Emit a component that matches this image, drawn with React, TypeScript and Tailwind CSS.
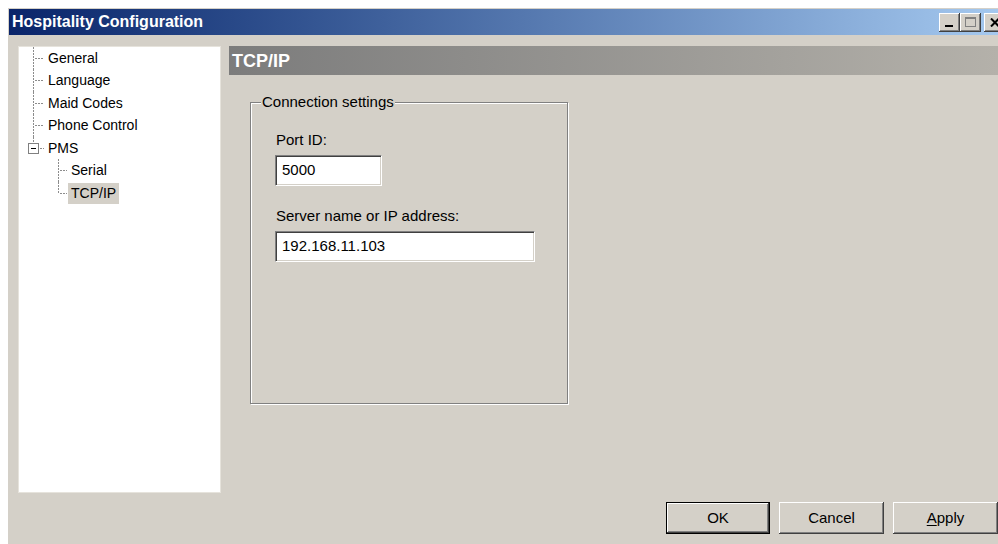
import type { ReactNode } from "react";

const FONT = { fontFamily: '"Liberation Sans", Arial, sans-serif' };

// classic 3D bevels
const RAISED =
  "shadow-[inset_-1px_-1px_0_#404040,inset_1px_1px_0_#ffffff,inset_-2px_-2px_0_#808080,inset_2px_2px_0_#d4d0c8]";
const SUNKEN =
  "border border-t-[#808080] border-l-[#808080] border-b-white border-r-white shadow-[inset_1px_1px_0_#404040,inset_-1px_-1px_0_#d4d0c8]";

function CaptionButton({ children, className = "" }: { children: ReactNode; className?: string }) {
  return (
    <div className={`w-[21px] h-[19px] bg-[#d4d0c8] flex items-center justify-center ${RAISED} ${className}`}>
      {children}
    </div>
  );
}

function TitleBar() {
  return (
    <div className="h-[26px] ml-[1px] pl-[3px] pr-[2px] flex items-center bg-gradient-to-r from-[#0a246a] to-[#a6caf0]">
      <span className="text-white font-bold text-[16px] leading-none">Hospitality Configuration</span>
      <div className="ml-auto flex items-center">
        <CaptionButton>
          <div className="w-[8px] h-[2px] bg-black mt-[8px] mr-[2px]" />
        </CaptionButton>
        <CaptionButton>
          <div className="w-[11px] h-[10px] border border-[#808080] border-t-2" />
        </CaptionButton>
        <CaptionButton className="ml-[3px]">
          <svg width="10" height="9" viewBox="0 0 10 9">
            <path d="M1 0.5 L9 8.5 M9 0.5 L1 8.5" stroke="#000" strokeWidth="2" />
          </svg>
        </CaptionButton>
      </div>
    </div>
  );
}

type Node = { label: string; level: 0 | 1; last?: boolean; expander?: boolean; selected?: boolean };

const TREE: Node[] = [
  { label: "General", level: 0 },
  { label: "Language", level: 0 },
  { label: "Maid Codes", level: 0 },
  { label: "Phone Control", level: 0 },
  { label: "PMS", level: 0, last: true, expander: true },
  { label: "Serial", level: 1 },
  { label: "TCP/IP", level: 1, last: true, selected: true },
];

const GUIDE = "#8c8c8c";

// tree guide lines for one row: vertical guide at `x`, stub out to the label
function Guide({ width, x, last, expander }: { width: number; x: number; last?: boolean; expander?: boolean }) {
  const mid = 11.5;
  const dots = { stroke: GUIDE, strokeWidth: 1, strokeDasharray: "2 1" };
  return (
    <svg width={width} height={23} className="shrink-0 block">
      {expander ? (
        <>
          <line x1={x + 0.5} y1={0} x2={x + 0.5} y2={6} {...dots} />
          <rect x={x - 4.5} y={6.5} width={10} height={10} fill="#fff" stroke="#808080" />
          <line x1={x - 2} y1={mid} x2={x + 3} y2={mid} stroke="#000" />
          <line x1={x + 7} y1={mid} x2={width - 1} y2={mid} {...dots} />
        </>
      ) : (
        <>
          <line x1={x + 0.5} y1={0} x2={x + 0.5} y2={last ? mid : 23} {...dots} />
          <line x1={x + 2} y1={mid} x2={width - 1} y2={mid} {...dots} />
        </>
      )}
    </svg>
  );
}

function TreeRow({ node }: { node: Node }) {
  return (
    <div className="h-[22.5px] flex items-center">
      {node.level === 1 && <div className="w-[26px] shrink-0" />}
      {node.level === 0 ? (
        <Guide width={26} x={14} last={node.last} expander={node.expander} />
      ) : (
        <Guide width={23} x={13} last={node.last} />
      )}
      <span
        className={`px-[3px] h-[21px] flex items-center text-[14px] text-black ${
          node.selected ? "bg-[#d4d0c8]" : ""
        }`}
      >
        {node.label}
      </span>
    </div>
  );
}

function Field({ label, value, width }: { label: string; value: string; width: number }) {
  return (
    <div className="flex flex-col">
      <span className="text-[15px] leading-[17px] pl-[1px]">{label}</span>
      <div
        className={`mt-[7px] h-[31px] bg-white flex items-center pl-[6px] text-[15px] ${SUNKEN}`}
        style={{ width }}
      >
        {value}
      </div>
    </div>
  );
}

function DialogButton({ children, isDefault }: { children: ReactNode; isDefault?: boolean }) {
  return (
    <button
      type="button"
      className={`h-[32px] bg-[#d4d0c8] text-[15px] text-black flex items-center justify-center ${
        isDefault ? "w-[104px] border border-black" : "w-[105px]"
      } ${RAISED}`}
    >
      {children}
    </button>
  );
}

export default function App() {
  return (
    <div className="w-[998px] h-[544px] overflow-hidden bg-white pt-2 pl-2" style={FONT}>
      <div className="w-[999px] h-[540px] bg-[#d4d0c8] pt-[1px] flex flex-col">
        <TitleBar />

        <div className="pt-[11px] pl-[10px] pr-[9px] flex flex-col">
          <div className="flex gap-[8px]">
            <div className="w-[203px] h-[447px] bg-white border border-[#e6e3dc] shrink-0">
              {TREE.map((n) => (
                <TreeRow key={n.label} node={n} />
              ))}
            </div>

            <div className="flex-1 flex flex-col">
              <div className="h-[29px] flex items-center pl-[3px] bg-gradient-to-r from-[#7c7c7c] to-[#b4b1aa]">
                <span className="text-white font-bold text-[18px] leading-none">TCP/IP</span>
              </div>

              <div className="mt-[27px] ml-[21px] relative w-[318px] h-[302px] border border-[#808080] shadow-[inset_1px_1px_0_#ffffff,1px_1px_0_#ffffff]">
                <span className="absolute -top-[10px] left-[10px] px-[1px] bg-[#d4d0c8] text-[15px] leading-[17px]">
                  Connection settings
                </span>
                <div className="pt-[28px] pl-[24px] flex flex-col gap-[21px]">
                  <Field label="Port ID:" value="5000" width={107} />
                  <Field label="Server name or IP address:" value="192.168.11.103" width={260} />
                </div>
              </div>
            </div>
          </div>

          <div className="mt-[9px] flex justify-end gap-[9px]">
            <DialogButton isDefault>OK</DialogButton>
            <DialogButton>Cancel</DialogButton>
            <DialogButton>
              <span>
                <span className="underline underline-offset-2">A</span>pply
              </span>
            </DialogButton>
          </div>
        </div>
      </div>
    </div>
  );
}
